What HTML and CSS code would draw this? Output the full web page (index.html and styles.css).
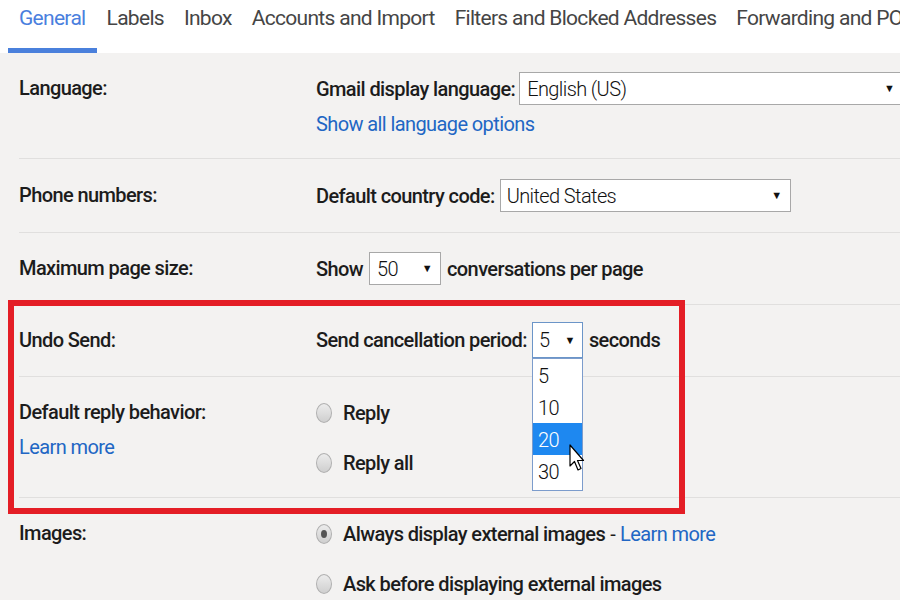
FILE: index.html
```
<!DOCTYPE html>
<html>
<head>
<meta charset="utf-8">
<link rel="stylesheet" href="styles.css">
</head>
<body>
<div class="page">
  <nav class="tabs">
    <span class="tab active">General</span>
    <span class="tab">Labels</span>
    <span class="tab">Inbox</span>
    <span class="tab">Accounts and Import</span>
    <span class="tab">Filters and Blocked Addresses</span>
    <span class="tab">Forwarding and POP/IMAP</span>
  </nav>
  <div class="settings">
    <div class="row row-lang">
      <div class="label">Language:</div>
      <div class="value">
        <div class="line"><span class="strong">Gmail display language:</span><span class="select sel-lang"><span class="sel-text">English (US)</span><span class="arrow">▼</span></span></div>
        <div class="line link-line"><a class="link">Show all language options</a></div>
      </div>
    </div>
    <div class="row row-phone">
      <div class="label">Phone numbers:</div>
      <div class="value">
        <div class="line"><span class="strong">Default country code:</span><span class="select sel-country"><span class="sel-text">United States</span><span class="arrow">▼</span></span></div>
      </div>
    </div>
    <div class="row row-size">
      <div class="label">Maximum page size:</div>
      <div class="value">
        <div class="line"><span class="strong">Show</span><span class="select sel-size"><span class="sel-text">50</span><span class="arrow">▼</span></span><span class="strong">conversations per page</span></div>
      </div>
    </div>
    <div class="row row-undo">
      <div class="label">Undo Send:</div>
      <div class="value">
        <div class="line"><span class="strong">Send cancellation period:</span><span class="select sel-undo"><span class="sel-text">5</span><span class="arrow">▼</span>
          <span class="dropdown">
            <span class="opt">5</span>
            <span class="opt">10</span>
            <span class="opt hl">20</span>
            <span class="opt">30</span>
            <svg class="cursor" width="16" height="28" viewBox="0 0 16 28"><path d="M1 1 L1 22 L5.5 17.5 L9 26 L12 24.5 L8.5 16.5 L14.5 16.5 Z" fill="#fff" stroke="#000" stroke-width="1.2" stroke-linejoin="round"/></svg>
          </span>
        </span><span class="strong">seconds</span></div>
      </div>
    </div>
    <div class="row row-reply">
      <div class="label">Default reply behavior:<br><a class="link learn">Learn more</a></div>
      <div class="value">
        <div class="line radio-line"><span class="radio"></span><span class="strong">Reply</span></div>
        <div class="line radio-line"><span class="radio"></span><span class="strong">Reply all</span></div>
      </div>
    </div>
    <div class="row row-images">
      <div class="label">Images:</div>
      <div class="value">
        <div class="line radio-line"><span class="radio checked"></span><span class="strong">Always display external images</span><span class="dash">-</span><a class="link">Learn more</a></div>
        <div class="line radio-line"><span class="radio"></span><span class="strong">Ask before displaying external images</span></div>
      </div>
    </div>
  </div>
  <div class="highlight-box"></div>
</div>
</body>
</html>
```
FILE: styles.css
```
html, body {
  margin: 0;
  padding: 0;
  background: #f3f2f1;
  overflow: hidden;
}
.page {
  position: relative;
  width: 900px;
  height: 600px;
  overflow: hidden;
  font-family: Roboto, "Liberation Sans", sans-serif;
  color: #1c1c1c;
  font-size: 20px;
  letter-spacing: -0.6px;
}
.tabs {
  display: flex;
  height: 53px;
  background: #fff;
  padding-left: 8px;
  white-space: nowrap;
  overflow: hidden;
}
.tab {
  padding: 0 10px;
  height: 48px;
  line-height: 36px;
  font-size: 21px;
  letter-spacing: -0.7px;
  color: #454545;
  flex: none;
}
.tab.active {
  color: #4a7fde;
  padding: 0 11px;
  border-bottom: 5px solid #4a80dc;
}
.settings {
  padding-left: 19px;
}
.row {
  display: grid;
  grid-template-columns: 297px 1fr;
  border-top: 1px solid #e0dfde;
}
.row-lang { border-top: none; padding: 19px 0 18px; }
.row-phone { padding: 20px 0 20px; }
.row-size { padding: 19px 0 19px; }
.row-undo { padding: 17px 0 18px; }
.row-undo .label { line-height: 36px; }
.row-undo .line { height: 36px; }
.row-reply { padding: 19px 0 18px; }
.row-images { padding: 19px 0 19px; }
.label {
  font-weight: 500;
  line-height: 33px;
}
.learn { line-height: 36px; }
.value {
  display: flex;
  flex-direction: column;
}
.line {
  display: flex;
  align-items: center;
  height: 33px;
  white-space: nowrap;
}
.strong { font-weight: 500; }
.link {
  color: #2166c4;
  font-weight: 400;
}
.link-line { margin-top: 3px; height: 32px; }
.select {
  position: relative;
  display: flex;
  align-items: center;
  box-sizing: border-box;
  height: 33px;
  background: #fff;
  border: 1px solid #a8a8a8;
  margin: 0 6px 0 4px;
  padding: 0 8px;
  font-weight: 300;
  color: #111;
}
.sel-text { flex: 1; }
.arrow {
  font-size: 11px;
  color: #111;
}
.sel-lang { width: 384px; margin-left: 4px; padding-left: 7px; }
.sel-country { width: 291px; margin-left: 5px; padding-left: 6px; }
.sel-size { width: 72px; margin-left: 6px; padding-left: 7px; }
.sel-undo { width: 51px; height: 36px; margin-left: 5px; padding: 0 7px 0 6px; border-color: #6b95c8; }
.dropdown {
  position: absolute;
  left: -1px;
  top: 35px;
  width: 51px;
  box-sizing: border-box;
  background: #fff;
  border: 1px solid #7c9ccc;
  display: flex;
  flex-direction: column;
  padding-bottom: 3px;
  z-index: 2;
}
.opt {
  height: 32px;
  line-height: 34px;
  padding-left: 5px;
  color: #111;
}
.opt.hl {
  background: #1e88f0;
  color: #fff;
}
.cursor {
  position: absolute;
  left: 36px;
  top: 85px;
}
.radio-line + .radio-line { margin-top: 17px; }
.radio {
  width: 16px;
  height: 20px;
  box-sizing: border-box;
  border-radius: 50%;
  border: 1px solid #b0b0b0;
  background: linear-gradient(#ececec, #cfcfcf);
  margin-right: 11px;
  flex: none;
  position: relative;
}
.radio.checked::after {
  content: "";
  position: absolute;
  left: 4px;
  top: 5px;
  width: 6px;
  height: 8px;
  border-radius: 50%;
  background: #555;
}
.dash { margin: 0 5px; font-weight: 400; }
.highlight-box {
  position: absolute;
  left: 8px;
  top: 300px;
  width: 677px;
  height: 214px;
  box-sizing: border-box;
  border: 6px solid #e41e26;
  pointer-events: none;
}
```
